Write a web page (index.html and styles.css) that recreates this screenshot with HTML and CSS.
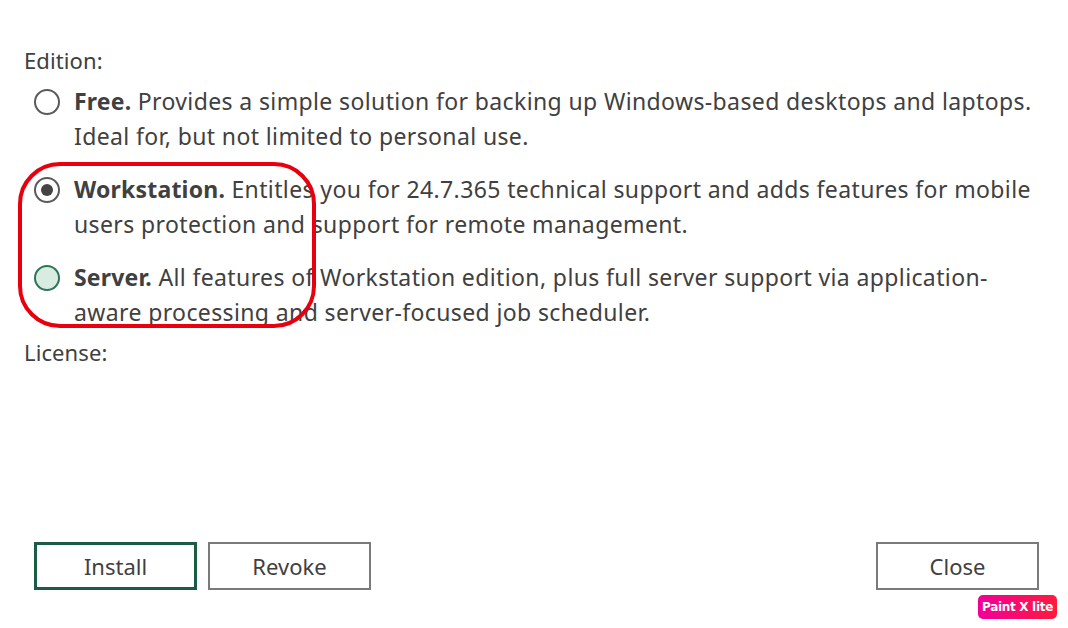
FILE: index.html
```html
<!DOCTYPE html>
<html lang="en">
<head>
    <meta charset="UTF-8">
    <title>Edition</title>
    <link rel="stylesheet" href="styles.css">
</head>
<body>
    <div class="dialog">
        <div class="label">Edition:</div>

        <div class="options">
            <div class="option">
                <span class="radio"></span>
                <p><b>Free.</b> Provides a simple solution for backing up Windows-based desktops and laptops.<br>Ideal for, but not limited to personal use.</p>
            </div>
            <div class="option">
                <span class="radio checked"></span>
                <p><b>Workstation.</b> Entitles you for 24.7.365 technical support and adds features for mobile<br>users protection and support for remote management.</p>
            </div>
            <div class="option last">
                <span class="radio hover"></span>
                <p><b>Server.</b> All features of Workstation edition, plus full server support via application-<br>aware processing and server-focused job scheduler.</p>
            </div>
            <div class="highlight"></div>
        </div>

        <div class="label">License:</div>

        <div class="buttons">
            <button class="btn primary">Install</button>
            <button class="btn">Revoke</button>
            <span class="spacer"></span>
            <button class="btn">Close</button>
        </div>
    </div>
    <span class="badge">Paint X lite</span>
</body>
</html>
```

FILE: styles.css
```css
body {
    margin: 0;
    background: #fff;
    font-family: 'Noto Sans', 'Open Sans', sans-serif;
    color: #404040;
    width: 1068px;
    height: 628px;
    overflow: hidden;
    position: relative;
}

.dialog {
    padding: 44px 0 0 24px;
    width: 1020px;
}

.label {
    font-size: 22px;
    line-height: 32px;
    letter-spacing: 0.1px;
}

.options {
    position: relative;
    padding: 8px 0 6px 0;
}

.option {
    display: flex;
    align-items: flex-start;
    gap: 14px;
    margin-bottom: 18px;
}

.option.last {
    margin-bottom: 0;
}

.option p {
    margin: 0;
    font-size: 23px;
    line-height: 35px;
    letter-spacing: 0.38px;
    white-space: nowrap;
}

.option b {
    font-weight: 700;
    letter-spacing: 0.2px;
}

.radio {
    flex: none;
    width: 26px;
    height: 26px;
    margin: 5px 0 0 10px;
    border: 2px solid #5a5a5a;
    border-radius: 50%;
    box-sizing: border-box;
    position: relative;
}

.radio.checked::after {
    content: "";
    position: absolute;
    left: 5px;
    top: 5px;
    width: 12px;
    height: 12px;
    border-radius: 50%;
    background: #444;
}

.radio.hover {
    border-color: #2d7458;
    background: #d9ece2;
}

.highlight {
    position: absolute;
    left: -6px;
    top: 86px;
    width: 298px;
    height: 166px;
    border: 4px solid #e8000e;
    border-radius: 42px;
    box-sizing: border-box;
}

.buttons {
    display: flex;
    gap: 11px;
    margin: 174px 0 0 10px;
    width: 1005px;
}

.spacer {
    flex: 1;
}

.btn {
    width: 163px;
    height: 48px;
    background: #fff;
    border: 2px solid #7a7a7a;
    font-family: inherit;
    font-size: 22px;
    color: #404040;
}

.btn.primary {
    border: 3px solid #1c5b44;
}

.badge {
    position: absolute;
    left: 978px;
    top: 595px;
    width: 79px;
    height: 24px;
    border-radius: 5px;
    background: linear-gradient(90deg, #f0009a, #ff1a3c);
    color: #fff;
    font-family: 'DejaVu Sans', sans-serif;
    font-weight: 700;
    font-size: 12px;
    letter-spacing: -0.3px;
    line-height: 24px;
    text-align: center;
}
```
